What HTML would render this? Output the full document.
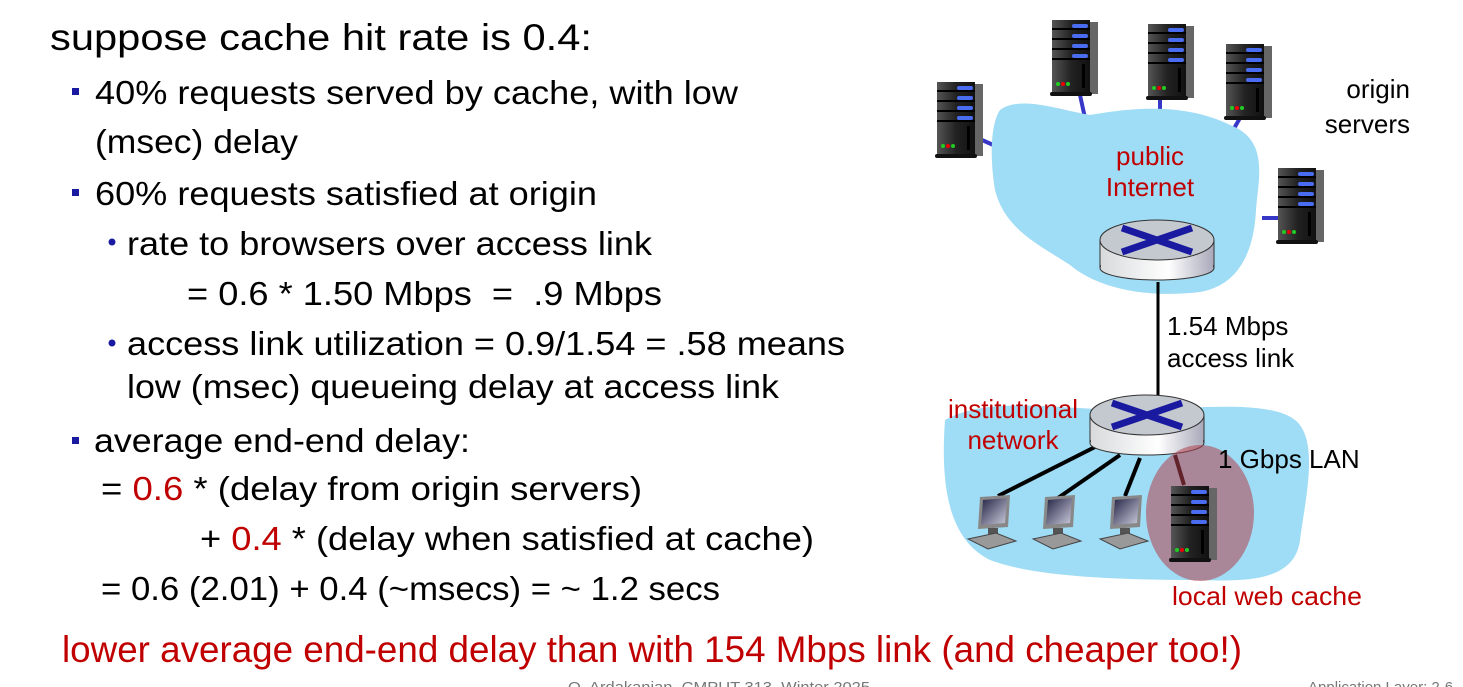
<!DOCTYPE html>
<html><head><meta charset="utf-8"><style>
html,body{margin:0;padding:0;background:#fff;width:1463px;height:687px;overflow:hidden}
svg{display:block}
.t{font-family:"Liberation Sans",sans-serif;font-size:33px}
.a{font-family:"Liberation Sans",sans-serif;font-size:26px}
</style></head><body>
<svg width="1463" height="687" viewBox="0 0 1463 687" xmlns="http://www.w3.org/2000/svg">
<defs>
<linearGradient id="sv" x1="0" x2="1"><stop offset="0" stop-color="#555"/><stop offset="0.5" stop-color="#222"/><stop offset="1" stop-color="#111"/></linearGradient>
<linearGradient id="rt" x1="0" x2="1"><stop offset="0" stop-color="#d8dadc"/><stop offset="0.6" stop-color="#fff"/><stop offset="1" stop-color="#aab"/></linearGradient>
<linearGradient id="sc" x1="0" y1="0" x2="1" y2="1"><stop offset="0" stop-color="#224"/><stop offset="1" stop-color="#ccd"/></linearGradient>
<g id="srv">
<rect x="0" y="0" width="38" height="74" fill="url(#sv)"/>
<rect x="38" y="2" width="8" height="72" fill="#666"/>
<rect x="0" y="8" width="38" height="2" fill="#000"/><rect x="0" y="18" width="38" height="2" fill="#000"/><rect x="0" y="28" width="38" height="2" fill="#000"/><rect x="0" y="38" width="38" height="2" fill="#000"/>
<rect x="20" y="4" width="16" height="4" rx="2" fill="#4a6cf0"/><rect x="20" y="14" width="16" height="4" rx="2" fill="#4a6cf0"/><rect x="20" y="24" width="16" height="4" rx="2" fill="#4a6cf0"/><rect x="20" y="34" width="16" height="4" rx="2" fill="#4a6cf0"/>
<rect x="30" y="44" width="3" height="24" fill="#000"/>
<circle cx="6" cy="64" r="2" fill="#2c2"/><circle cx="11" cy="64" r="2" fill="#e00"/><circle cx="16" cy="64" r="2" fill="#2c2"/>
<rect x="-2" y="72" width="42" height="4" rx="2" fill="#111"/>
</g>
<g id="rtr">
<rect x="0" y="20" width="114" height="28" fill="url(#rt)" stroke="#333"/>
<ellipse cx="57" cy="48" rx="57" ry="12" fill="url(#rt)" stroke="#333"/>
<rect x="1" y="20" width="112" height="28" fill="url(#rt)"/>
<ellipse cx="57" cy="20" rx="57" ry="20" fill="#c4c9d0" stroke="#333"/>
<path d="M22 8 L57 20 L92 8 M22 32 L57 20 L92 32" stroke="#1a1aa0" stroke-width="7" fill="none"/>
</g>
<g id="pc">
<path d="M12 0 L42 -2 L40 30 L10 32 Z" fill="#888"/>
<path d="M15 3 L39 1 L37 26 L13 28 Z" fill="url(#sc)"/>
<rect x="20" y="31" width="10" height="6" fill="#555"/>
<path d="M0 42 L28 36 L48 44 L20 52 Z" fill="#999" stroke="#444"/>
</g>
</defs>

<g stroke="#3838c8" stroke-width="4">
<line x1="982" y1="140" x2="1000" y2="148"/><line x1="1080" y1="95" x2="1085" y2="118"/>
<line x1="1160" y1="100" x2="1160" y2="110"/><line x1="1240" y1="118" x2="1232" y2="132"/>
<line x1="1262" y1="218" x2="1278" y2="218"/>
</g>
<path d="M1000 110 C1020 95 1060 110 1090 115 C1120 110 1180 100 1230 125 C1270 140 1258 180 1256 210 C1254 250 1240 285 1200 292 C1150 298 1100 290 1070 265 C1040 245 1005 230 995 190 C990 160 990 125 1000 110 Z" fill="#9fdcf5"/>
<path d="M945 420 C990 395 1060 410 1130 410 C1200 408 1270 400 1295 420 C1320 440 1305 500 1300 540 C1295 580 1250 582 1200 580 C1100 580 1030 575 990 560 C950 540 940 490 945 420 Z" fill="#9fdcf5"/>
<line x1="1158" y1="282" x2="1158" y2="400" stroke="#000" stroke-width="3"/>
<g stroke="#000" stroke-width="4">
<line x1="1095" y1="447" x2="998" y2="496"/><line x1="1120" y1="455" x2="1058" y2="498"/>
<line x1="1140" y1="458" x2="1125" y2="496"/><line x1="1175" y1="455" x2="1184" y2="485"/>
</g>
<use href="#srv" x="937" y="82"/><use href="#srv" x="1052" y="20"/><use href="#srv" x="1148" y="24"/><use href="#srv" x="1226" y="44"/><use href="#srv" x="1278" y="168"/>
<use href="#rtr" x="1100" y="220"/><use href="#rtr" x="1090" y="395"/>
<use href="#pc" x="968" y="497"/><use href="#pc" x="1033" y="497"/><use href="#pc" x="1100" y="497"/>
<ellipse cx="1200" cy="513" rx="54" ry="68" fill="#b0404a" fill-opacity="0.55"/>
<use href="#srv" x="1171" y="486"/>

<text class="a" x="1410" y="98" text-anchor="end" style="fill:#000">origin</text>
<text class="a" x="1410" y="133" text-anchor="end" style="fill:#000">servers</text>
<text class="a" x="1150" y="165" text-anchor="middle" style="fill:#c00000">public</text>
<text class="a" x="1150" y="196" text-anchor="middle" style="fill:#c00000">Internet</text>
<text class="a" x="1167" y="335" style="fill:#000">1.54 Mbps</text>
<text class="a" x="1167" y="367" style="fill:#000">access link</text>
<text class="a" x="1013" y="418" text-anchor="middle" style="fill:#c00000">institutional</text>
<text class="a" x="1013" y="449" text-anchor="middle" style="fill:#c00000">network</text>
<text class="a" x="1218" y="468" style="fill:#000">1 Gbps LAN</text>
<text class="a" x="1172" y="605" style="fill:#c00000" textLength="190" lengthAdjust="spacingAndGlyphs">local web cache</text>

<text class="t" x="50" y="50" style="font-size:37px;fill:#000" textLength="542" lengthAdjust="spacingAndGlyphs">suppose cache hit rate is 0.4:</text>
<g fill="#1a1aa0"><rect x="72" y="88" width="7" height="7"/><rect x="72" y="189" width="7" height="7"/><rect x="72" y="437" width="7" height="7"/></g>
<g fill="#1a1aa0"><circle cx="112" cy="242" r="3.5"/><circle cx="112" cy="343" r="3.5"/></g>
<g style="fill:#000">
<text class="t" x="95" y="104" textLength="643" lengthAdjust="spacingAndGlyphs">40% requests served by cache, with low</text>
<text class="t" x="95" y="153" textLength="203" lengthAdjust="spacingAndGlyphs">(msec) delay</text>
<text class="t" x="95" y="205" textLength="502" lengthAdjust="spacingAndGlyphs">60% requests satisfied at origin</text>
<text class="t" x="127" y="255" textLength="525" lengthAdjust="spacingAndGlyphs">rate to browsers over access link</text>
<text class="t" x="187" y="305" textLength="475" lengthAdjust="spacingAndGlyphs" xml:space="preserve">= 0.6 * 1.50 Mbps  =  .9 Mbps</text>
<text class="t" x="127" y="355" textLength="718" lengthAdjust="spacingAndGlyphs">access link utilization = 0.9/1.54 = .58 means</text>
<text class="t" x="127" y="398" textLength="652" lengthAdjust="spacingAndGlyphs">low (msec) queueing delay at access link</text>
<text class="t" x="94" y="452" textLength="376" lengthAdjust="spacingAndGlyphs">average end-end delay:</text>
<text class="t" x="101" y="500" textLength="541" lengthAdjust="spacingAndGlyphs">= <tspan style="fill:#c00000">0.6</tspan> * (delay from origin servers)</text>
<text class="t" x="200" y="550" textLength="614" lengthAdjust="spacingAndGlyphs">+ <tspan style="fill:#c00000">0.4</tspan> * (delay when satisfied at cache)</text>
<text class="t" x="101" y="600" textLength="619" lengthAdjust="spacingAndGlyphs">= 0.6 (2.01) + 0.4 (~msecs) = ~ 1.2 secs</text>
</g>
<text class="t" x="62" y="662" style="font-size:37px;fill:#c00000" textLength="1180" lengthAdjust="spacingAndGlyphs">lower average end-end delay than with 154 Mbps link (and cheaper too!)</text>
<text x="568" y="692" fill="#777" style="font-family:'Liberation Sans',sans-serif;font-size:15px" textLength="302" lengthAdjust="spacingAndGlyphs">O. Ardakanian, CMPUT 313, Winter 2025</text>
<text x="1308" y="692" fill="#777" style="font-family:'Liberation Sans',sans-serif;font-size:15px">Application Layer: 2-6</text>
</svg>
</body></html>
